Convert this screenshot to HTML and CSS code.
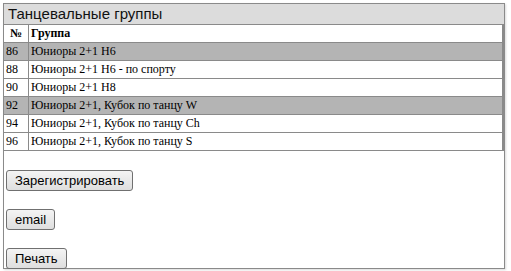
FILE: index.html
```html
<!DOCTYPE html>
<html lang="ru">

<head>
    <meta charset="UTF-8">
    <meta name="viewport" content="width=device-width, initial-scale=1.0">
    <title>Танцевальные группы</title>
    <link rel="stylesheet" href="styles.css">
</head>

<body>
    <div class="panel">
        <div class="panel-title">Танцевальные группы</div>
        <table class="groups">
            <tr>
                <th class="num">№</th>
                <th>Группа</th>
            </tr>
            <tr class="marked">
                <td class="num">86</td>
                <td>Юниоры 2+1 Н6</td>
            </tr>
            <tr>
                <td class="num">88</td>
                <td>Юниоры 2+1 Н6 - по спорту</td>
            </tr>
            <tr>
                <td class="num">90</td>
                <td>Юниоры 2+1 Н8</td>
            </tr>
            <tr class="marked">
                <td class="num">92</td>
                <td>Юниоры 2+1, Кубок по танцу W</td>
            </tr>
            <tr>
                <td class="num">94</td>
                <td>Юниоры 2+1, Кубок по танцу Ch</td>
            </tr>
            <tr>
                <td class="num">96</td>
                <td>Юниоры 2+1, Кубок по танцу S</td>
            </tr>
        </table>

        <div class="actions">
            <button type="button">Зарегистрировать</button>
            <button type="button">email</button>
            <button type="button">Печать</button>
        </div>
    </div>
</body>

</html>
```

FILE: styles.css
```css
body {
    margin: 0;
    padding: 3px;
    background: #fff;
}

.panel {
    width: 500px;
    height: 264px;
    border: 1px solid #8a8a8a;
    box-shadow: 1px 1px 2px rgba(0, 0, 0, 0.15);
}

.panel-title {
    height: 20px;
    line-height: 20px;
    padding-left: 4px;
    background: #dcdcdc;
    border-bottom: 1px solid #8a8a8a;
    font-family: "Liberation Sans", sans-serif;
    font-size: 15px;
    color: #111;
}

.groups {
    width: 100%;
    border-collapse: collapse;
    font-family: "Liberation Serif", serif;
    font-size: 12px;
    color: #000;
}

.groups th,
.groups td {
    height: 17px;
    padding: 0 2px;
    text-align: left;
    border-bottom: 1px solid #8a8a8a;
    border-right: 2px solid #8a8a8a;
}

.groups .num {
    width: 20px;
    border-right: 1px solid #8a8a8a;
}

.groups th.num {
    text-align: center;
}

.groups tr.marked td {
    background: #b4b4b4;
}

.actions {
    display: flex;
    flex-direction: column;
    align-items: flex-start;
    gap: 18px;
    padding: 19px 2px 0;
}

.actions button {
    height: 21px;
    padding: 0 8px;
    font-family: "Liberation Sans", sans-serif;
    font-size: 13px;
    color: #000;
    background: linear-gradient(#f4f4f4, #dedede);
    border: 1px solid #707070;
    border-radius: 3px;
}
```
